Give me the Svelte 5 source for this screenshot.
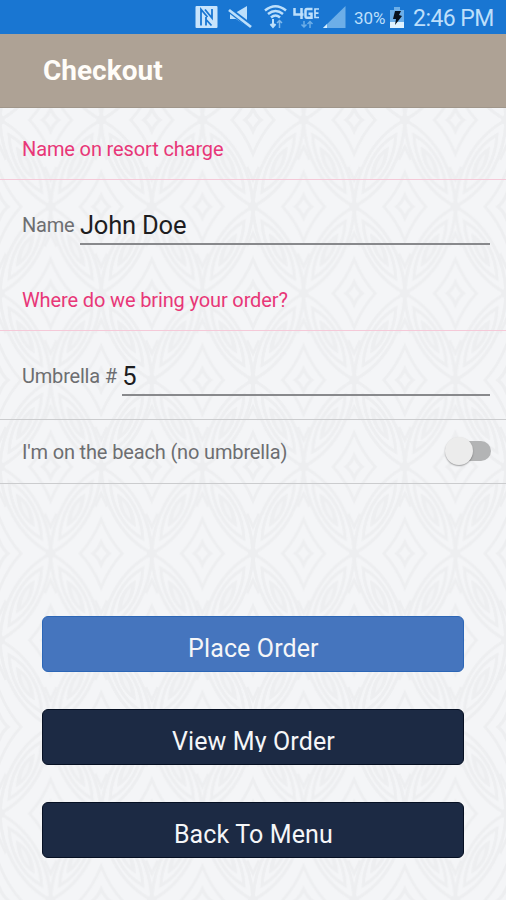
<script>
  let onBeach = $state(false);
  let name = $state('John Doe');
  let umbrella = $state('5');

  const W = 101.2;
  const H = 173.4;
  const stars = [[0, 0], [W, 0], [W / 2, H / 2], [0, H], [W, H]];
  const gems = [[W / 2, 0], [0, H / 2], [W, H / 2], [W / 2, H]];
  const flips = ['1 1', '-1 1', '1 -1', '-1 -1'];
</script>

<div class="screen">
  <svg class="weave" width="506" height="900" aria-hidden="true">
    <defs>
      <pattern id="leaves" patternUnits="userSpaceOnUse" x="0" y="120" width={W} height={H}>
        <g fill="none" stroke="#edeef0" stroke-width="2.800">
          {#each gems as [x, y]}
            <g transform="translate({x} {y})">
              <path d="M0-11Q3-4 8 0Q3 4 0 11Q-3 4-8 0Q-3-4 0-11Z" stroke-width="3.400" />
              <path d="M0-34Q8-14 21 0Q8 14 0 34Q-8 14-21 0Q-8-14 0-34Z" />
              <path d="M-6-47L0-60L6-47M-6 47L0 60L6 47" />
            </g>
          {/each}
          {#each stars as [x, y]}
            {#each flips as f}
              <g transform="translate({x} {y}) scale({f})">
                <path d="M0 0C1 32 16 68 50.600 86.700C49.600 54.700 34.600 18.700 0 0Z" />
                <path d="M9 15C10 37 20 60 41.500 72C40.500 50 30.500 27 9 15Z" />
                <path d="M17 28C18 42 24 53 34 59C33 45 27 34 17 28Z" fill="#edeef0" stroke-width="1.200" />
                <path d="M21 34C22 42 25 49 30 53C29 45 26 38 21 34Z" fill="#f2f3f5" stroke="none" />
              </g>
            {/each}
            <circle cx={x} cy={y} r="5" fill="#edeef0" stroke="none" />
          {/each}
        </g>
      </pattern>
    </defs>
    <rect width="506" height="900" fill="url(#leaves)" />
  </svg>

  <div class="status">
    <svg class="tray" width="156" height="34" viewBox="192 0 156 34" aria-hidden="true">
      <rect x="195.500" y="6" width="22" height="22" rx="1" fill="#c8e4fc" />
      <path fill="none" stroke="#1976d2" stroke-width="1.800" d="M201 25.500V9.500L207.500 17M205 9.500L212 18V9M206 17v8.500M206 19.500l5.500 6" />
      <path fill="#bcdffb" d="M230 12.500h6l11-6.500v20l-11-7h-6z" />
      <path stroke="#1976d2" stroke-width="5.500" d="M228 9l25 19" />
      <path stroke="#bcdffb" stroke-width="2.800" d="M229 10l22 17" />
      <g fill="none" stroke="#bcdffb" stroke-width="2.500">
        <path d="M265 10.500Q275.500 2 286 10.500M268 14Q275.500 8 283 14M271 17.500Q275.500 13.500 280 17.500" />
        <path d="M273 19v8M270.500 24l2.500 3 2.500-3" stroke-width="2" />
        <path d="M279.500 28v-7M277 23l2.500-2.500 2.500 2.500" stroke-width="1.500" opacity=".65" />
      </g>
      <g fill="none" stroke="#bcdffb" stroke-width="2.500">
        <path d="M294.500 8v6.500h9M301.500 8v11" />
        <path d="M312.500 9h-5.500q-1.500 0-1.500 2v5q0 1.800 1.500 1.800h4.500v-4h-3" />
        <path d="M319 9h-4v8.500h4M315 13.200h3.500" stroke-width="1.700" />
      </g>
      <path fill="none" stroke="#6caee8" stroke-width="1.500" d="M304 21v6M301.500 24.500l2.500 2.500 2.500-2.500M310 28v-6M307.500 24l2.500-2.500 2.500 2.500" />
      <path fill="#6caee8" d="M323 28L345.500 6v22z" />
      <path fill="#d8efff" d="M323 28l4-4v4z" />
    </svg>
    <span class="pct">30%</span>
    <svg class="battery" width="16" height="24" viewBox="0 0 16 24" aria-hidden="true">
      <path fill="#6caee8" d="M5 1h6v3h4v12H1V4h4z" />
      <path fill="#e1f3ff" d="M1 16h14v6H1z" />
      <path fill="#08111c" d="M6 5h6l-2 4 3 1-7 9 1-6H4z" />
    </svg>
    <span class="clock">2:46 PM</span>
  </div>

  <header><h1>Checkout</h1></header>

  <main>
    <h2>Name on resort charge</h2>
    <label class="field first">
      <span>Name</span>
      <input bind:value={name} />
    </label>
    <h2>Where do we bring your order?</h2>
    <label class="field second">
      <span>Umbrella #</span>
      <input bind:value={umbrella} />
    </label>
    <div class="toggle-row">
      <span>I'm on the beach (no umbrella)</span>
      <button class="switch" class:on={onBeach} role="switch" aria-checked={onBeach} aria-label="On the beach" onclick={() => (onBeach = !onBeach)}><i></i></button>
    </div>
  </main>

  <div class="actions">
    <button class="primary"><span>Place Order</span></button>
    <button><span class="tight">View My Order</span></button>
    <button><span>Back To Menu</span></button>
  </div>
</div>

<style>
  :global(body) { margin: 0; }
  .screen {
    position: relative;
    isolation: isolate;
    width: 506px;
    height: 900px;
    overflow: hidden;
    display: flex;
    flex-direction: column;
    background: #f4f5f7;
    font-family: Roboto, "Liberation Sans", sans-serif;
  }
  .weave { position: absolute; inset: 0; z-index: -1; filter: blur(0.6px); }
  .status {
    height: 34px;
    flex: none;
    display: flex;
    align-items: center;
    background: #1976d2;
    color: #bcdffb;
    padding-left: 192px;
    white-space: nowrap;
  }
  .tray { flex: none; }
  .pct { width: 32px; margin-left: 6px; font-size: 17px; line-height: 34px; padding-top: 2px; }
  .battery { margin-left: 3px; margin-top: 1px; flex: none; }
  .clock { margin-left: 8px; font-size: 23px; line-height: 34px; padding-top: 3px; letter-spacing: -0.550px; }
  header {
    box-sizing: border-box;
    height: 74px;
    flex: none;
    padding: 0 43px;
    background: #aea295;
    border-bottom: 1px solid #a0968a;
  }
  h1 { margin: 0; font-size: 28px; line-height: 73px; font-weight: 700; color: #fffdf9; }
  main { height: 376px; flex: none; }
  h2 {
    box-sizing: border-box;
    height: 72px;
    margin: 0;
    padding: 10px 22px 0;
    font-size: 20px;
    letter-spacing: -0.130px;
    line-height: 63px;
    font-weight: 400;
    color: #e83778;
    border-bottom: 1px solid #f5c9d8;
  }
  .field {
    display: flex;
    align-items: flex-start;
    padding: 25px 16px 0 22px;
    box-sizing: border-box;
    color: #6d6e71;
    font-size: 20px;
    letter-spacing: -0.200px;
    line-height: 40px;
  }
  .first { height: 79px; }
  .second { height: 88px; }
  .field span { flex: none; padding-right: 5.500px; }
  input {
    box-sizing: border-box;
    flex: 1;
    min-width: 0;
    height: 40px;
    padding: 1px 0 0;
    border: 0;
    border-bottom: 2px solid #88898c;
    border-radius: 0;
    outline: 0;
    background: transparent;
    color: #1d1d1f;
    font: 25.500px Roboto, "Liberation Sans", sans-serif;
    letter-spacing: -0.200px;
  }
  .toggle-row {
    box-sizing: border-box;
    height: 65px;
    padding: 1px 15px 0 22px;
    display: flex;
    align-items: center;
    justify-content: space-between;
    border-top: 1px solid #cbccce;
    border-bottom: 1px solid #cbccce;
    color: #6d6e71;
    font-size: 20px;
    letter-spacing: -0.150px;
  }
  .switch {
    width: 38px;
    height: 20px;
    padding: 0;
    border: 0;
    background: #b3b4b5;
    border-radius: 10px;
    display: flex;
    align-items: center;
    margin-top: -2px;
  }
  .switch i {
    flex: none;
    width: 28px;
    height: 28px;
    margin: 0 -8px;
    border-radius: 50%;
    background: #ececec;
    box-shadow: 0 1px 1.500px rgba(0, 0, 0, 0.35);
  }
  .switch.on { justify-content: flex-end; }
  .actions { display: flex; flex-direction: column; gap: 37px; padding: 132px 42px 0 42.400px; }
  .actions button {
    box-sizing: border-box;
    width: 422px;
    height: 56px;
    border: 1.500px solid #061023;
    border-radius: 6px;
    background: #1c2a44;
    color: #f5f6f8;
    font: 25px Roboto, "Liberation Sans", sans-serif;
    letter-spacing: 0.120px;
    padding: 9px 0 0;
    display: flex;
    align-items: center;
    justify-content: center;
  }
  .actions .primary { background: #4575be; border-color: #2c66b6; }
  .actions span { line-height: 30px; }
  .actions .tight { height: 25px; margin-bottom: 5px; overflow: hidden; }
</style>
